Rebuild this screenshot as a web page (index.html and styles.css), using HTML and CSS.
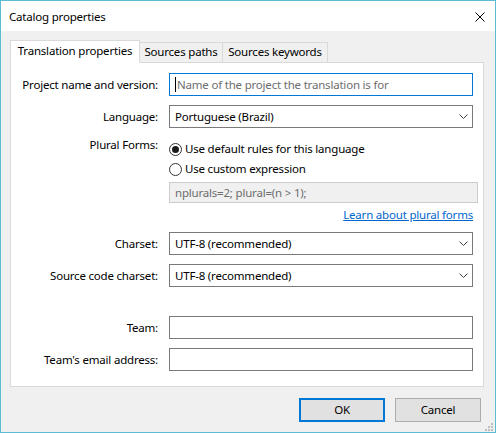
FILE: index.html
```html
<!DOCTYPE html>
<html>
<head>
<meta charset="utf-8">
<title>Catalog properties</title>
<link rel="stylesheet" href="styles.css">
</head>
<body>
<div class="window">
  <div class="titlebar">
    <span class="title">Catalog properties</span>
    <svg class="close" width="10" height="10" viewBox="0 0 10 10"><path d="M0.5 0.5L9.5 9.5M9.5 0.5L0.5 9.5" stroke="#000" stroke-width="1" fill="none"/></svg>
  </div>
  <div class="client">
    <div class="tabs">
      <div class="tab tab-active tab-w1">Translation properties</div>
      <div class="tab tab-w2">Sources paths</div>
      <div class="tab tab-w3">Sources keywords</div>
    </div>
    <div class="panel">
      <div class="form">
        <div class="lbl">Project name and version:</div>
        <div class="field field-focused"><span class="caret"></span><span class="placeholder">Name of the project the translation is for</span></div>

        <div class="lbl">Language:</div>
        <div class="field field-select"><span>Portuguese (Brazil)</span><svg class="chev" width="9" height="5" viewBox="0 0 9 5"><path d="M0.5 0.5L4.5 4.5L8.5 0.5" stroke="#404040" stroke-width="1" fill="none"/></svg></div>

        <div class="lbl lbl-top">Plural Forms:</div>
        <div class="plural">
          <div class="radio-row"><span class="radio radio-on"></span><span class="radio-text">Use default rules for this language</span></div>
          <div class="radio-row radio-row-2"><span class="radio"></span><span class="radio-text">Use custom expression</span></div>
          <div class="field-disabled">nplurals=2; plural=(n &gt; 1);</div>
          <div class="link-row"><a class="link" href="#">Learn about plural forms</a></div>
        </div>

        <div class="lbl">Charset:</div>
        <div class="field field-select"><span>UTF-8 (recommended)</span><svg class="chev" width="9" height="5" viewBox="0 0 9 5"><path d="M0.5 0.5L4.5 4.5L8.5 0.5" stroke="#404040" stroke-width="1" fill="none"/></svg></div>

        <div class="lbl">Source code charset:</div>
        <div class="field field-select"><span>UTF-8 (recommended)</span><svg class="chev" width="9" height="5" viewBox="0 0 9 5"><path d="M0.5 0.5L4.5 4.5L8.5 0.5" stroke="#404040" stroke-width="1" fill="none"/></svg></div>

        <div class="spacer"></div>

        <div class="lbl">Team:</div>
        <div class="field"></div>

        <div class="lbl">Team's email address:</div>
        <div class="field"></div>
      </div>
    </div>
    <div class="buttons">
      <div class="btn btn-default">OK</div>
      <div class="btn">Cancel</div>
    </div>
  </div>
  <svg class="grip" width="8" height="8" viewBox="0 0 8 8">
    <rect x="6" y="0" width="2" height="2" fill="#bcbcbc"/>
    <rect x="3" y="3" width="2" height="2" fill="#bcbcbc"/>
    <rect x="6" y="3" width="2" height="2" fill="#bcbcbc"/>
    <rect x="0" y="6" width="2" height="2" fill="#bcbcbc"/>
    <rect x="3" y="6" width="2" height="2" fill="#bcbcbc"/>
    <rect x="6" y="6" width="2" height="2" fill="#bcbcbc"/>
  </svg>
</div>
</body>
</html>
```

FILE: styles.css
```css
* { box-sizing: border-box; }
html, body { margin: 0; padding: 0; }
body {
  width: 496px;
  height: 433px;
  font-family: "Noto Sans", "Open Sans", sans-serif;
  font-size: 11.5px;
  letter-spacing: -0.2px;
  line-height: 16px;
  color: #000;
  background: #fff;
  overflow: hidden;
}
.window {
  width: 496px;
  height: 433px;
  border: 1px solid #5cbcd6;
  display: flex;
  flex-direction: column;
  position: relative;
  background: #f0f0f0;
}
.titlebar {
  height: 30px;
  flex: none;
  background: #fff;
  display: flex;
  align-items: center;
  justify-content: space-between;
  padding: 1px 10px 0 8px;
}
.close { display: block; }
.client {
  flex: 1;
  display: flex;
  flex-direction: column;
  padding: 9px 11px 10px 9px;
}
.tabs {
  display: flex;
  align-items: flex-end;
  height: 22px;
  position: relative;
  z-index: 1;
}
.tab {
  height: 21px;
  margin-bottom: -1px;
  margin-left: -1px;
  border: 1px solid #d9d9d9;
  background: #f0f0f0;
  text-align: center;
  padding-top: 1px;
  white-space: nowrap;
}
.tab-active {
  height: 23px;
  margin-left: 0;
  background: #fff;
  border-bottom-color: #fff;
  position: relative;
  z-index: 2;
  padding-top: 2px;
}
.tab-w1 { width: 130px; }
.tab-w2 { width: 84px; }
.tab-w3 { width: 106px; }
.panel {
  width: 474px;
  background: #fff;
  border: 1px solid #d9d9d9;
  padding: 10px 10px 15px 12px;
}
.form {
  display: grid;
  grid-template-columns: 135px 304px;
  column-gap: 11px;
  row-gap: 9px;
}
.lbl {
  justify-self: end;
  align-self: center;
  white-space: nowrap;
}
.lbl-top { align-self: start; }
.field {
  height: 23px;
  border: 1px solid #7a7a7a;
  background: #fff;
  display: flex;
  align-items: center;
  padding: 0 5px;
  white-space: nowrap;
}
.field-focused { border-color: #0078d7; }
.field-select { justify-content: space-between; padding-right: 4px; }
.chev { display: block; }
.caret {
  display: inline-block;
  width: 1px;
  height: 15px;
  background: #000;
  margin-right: 1px;
}
.placeholder { color: #6d6d6d; }
.plural {
  display: flex;
  flex-direction: column;
  padding-top: 4px;
}
.radio-row {
  height: 16px;
  display: flex;
  align-items: center;
}
.radio-row-2 { margin-top: 4px; }
.radio {
  width: 13px;
  height: 13px;
  border: 1px solid #333;
  border-radius: 50%;
  background: #fff;
  position: relative;
  flex: none;
}
.radio-on::after {
  content: "";
  position: absolute;
  left: 2px;
  top: 2px;
  width: 7px;
  height: 7px;
  border-radius: 50%;
  background: #1a1a1a;
}
.radio-text { margin-left: 3px; }
.field-disabled {
  margin-top: 5px;
  margin-right: -5px;
  height: 21px;
  border: 1px solid #cccccc;
  background: #f0f0f0;
  color: #6d6d6d;
  padding: 0 5px;
  display: flex;
  align-items: center;
}
.link-row {
  margin-top: 4px;
  height: 16px;
  display: flex;
  justify-content: flex-end;
}
.link {
  color: #0066cc;
  text-decoration: underline;
}
.spacer {
  grid-column: 1 / 3;
  height: 11px;
}
.buttons {
  display: flex;
  justify-content: flex-end;
  gap: 10px;
  margin-top: 11px;
  padding-right: 3px;
}
.btn {
  width: 86px;
  height: 24px;
  border: 1px solid #adadad;
  background: #e1e1e1;
  display: flex;
  align-items: center;
  justify-content: center;
}
.btn-default { border: 2px solid #0078d7; }
.grip {
  position: absolute;
  right: 2px;
  bottom: 1px;
  display: block;
}
```
